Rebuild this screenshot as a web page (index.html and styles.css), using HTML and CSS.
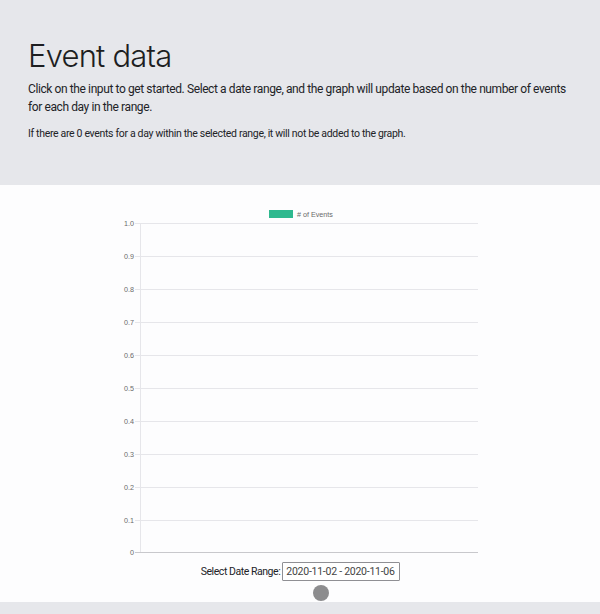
FILE: index.html
```html
<!DOCTYPE html>
<html lang="en">
<head>
<meta charset="utf-8">
<title>Event data</title>
<link rel="stylesheet" href="styles.css">
</head>
<body>
<header class="hero">
  <h1 class="hero-title">Event data</h1>
  <p class="hero-lead">Click on the input to get started. Select a date range, and the graph will update based on the number of events for each day in the range.</p>
  <p class="hero-note">If there are 0 events for a day within the selected range, it will not be added to the graph.</p>
</header>
<main class="content">
  <div class="chart">
    <svg class="chart-svg" width="390" height="358" viewBox="0 0 390 358" xmlns="http://www.w3.org/2000/svg">
      <rect x="169.5" y="10.5" width="23" height="7" fill="#2fb98f" stroke="#2fb98f" stroke-width="1"/>
      <text class="legend-text" x="197" y="16.6"># of Events</text>
      <g class="grid" stroke="#e6e6ea" stroke-width="1">
        <line x1="35" y1="23.5" x2="378" y2="23.5"/>
        <line x1="35" y1="56.5" x2="378" y2="56.5"/>
        <line x1="35" y1="89.5" x2="378" y2="89.5"/>
        <line x1="35" y1="122.5" x2="378" y2="122.5"/>
        <line x1="35" y1="155.5" x2="378" y2="155.5"/>
        <line x1="35" y1="188.5" x2="378" y2="188.5"/>
        <line x1="35" y1="221.5" x2="378" y2="221.5"/>
        <line x1="35" y1="254.5" x2="378" y2="254.5"/>
        <line x1="35" y1="287.5" x2="378" y2="287.5"/>
        <line x1="35" y1="320.5" x2="378" y2="320.5"/>
        <line x1="40.5" y1="23" x2="40.5" y2="353"/>
      </g>
      <line x1="35" y1="352.5" x2="378" y2="352.5" stroke="#c8c8cc" stroke-width="1"/>
      <g class="ticks">
        <text x="34" y="26.2">1.0</text>
        <text x="34" y="59.2">0.9</text>
        <text x="34" y="92.2">0.8</text>
        <text x="34" y="125.2">0.7</text>
        <text x="34" y="158.2">0.6</text>
        <text x="34" y="191.2">0.5</text>
        <text x="34" y="224.2">0.4</text>
        <text x="34" y="257.2">0.3</text>
        <text x="34" y="290.2">0.2</text>
        <text x="34" y="323.2">0.1</text>
        <text x="34" y="355.2">0</text>
      </g>
    </svg>
  </div>
  <div class="range">
    <label class="range-label" for="range">Select Date Range:</label>
    <input class="range-input" id="range" type="text" value="2020-11-02 - 2020-11-06" readonly>
  </div>
  <span class="cursor-dot"></span>
</main>
<footer class="band"></footer>
</body>
</html>
```

FILE: styles.css
```css
* { box-sizing: border-box; }
html, body { margin: 0; padding: 0; }
body {
  background: #fdfdfe;
  font-family: Inter, "Noto Sans", "Liberation Sans", sans-serif;
  color: #1d1e21;
  width: 600px;
  height: 614px;
  overflow: hidden;
}
.hero {
  background: #e6e7eb;
  height: 185px;
  padding: 38px 28px 0 28px;
}
.hero-title {
  margin: 0;
  font-weight: 300;
  font-size: 31px;
  line-height: 36px;
  letter-spacing: -0.8px;
}
.hero-lead {
  margin: 6px 0 0 0;
  font-family: Roboto, "Noto Sans", sans-serif;
  font-size: 12px;
  line-height: 18px;
  letter-spacing: -0.4px;
  color: #222327;
}
.hero-note {
  margin: 11px 0 0 0;
  font-family: Roboto, "Noto Sans", sans-serif;
  font-size: 10.5px;
  line-height: 14px;
  letter-spacing: -0.33px;
  color: #222327;
}
.content {
  position: relative;
  height: 417px;
  padding-top: 15px;
  display: flex;
  flex-direction: column;
  align-items: center;
}
.chart {
  width: 390px;
  height: 358px;
  margin-left: -10px;
}
.chart-svg { display: block; }
.legend-text {
  font-family: "Liberation Sans", Arial, sans-serif;
  font-size: 7.2px;
  fill: #6a6a6a;
}
.ticks text {
  font-family: "Liberation Sans", Arial, sans-serif;
  font-size: 7.2px;
  fill: #6a6a6a;
  text-anchor: end;
}
.range {
  margin-top: 4px;
  display: flex;
  align-items: center;
  gap: 2px;
  margin-left: 1px;
}
.range-label {
  font-family: Roboto, "Noto Sans", sans-serif;
  font-size: 10.5px;
  letter-spacing: -0.45px;
  color: #222327;
}
.range-input {
  width: 118px;
  height: 19px;
  border: 1px solid #8f8f94;
  border-radius: 1px;
  padding: 0 3px;
  font-family: Roboto, "Noto Sans", sans-serif;
  font-size: 10.5px;
  letter-spacing: -0.25px;
  color: #444;
  background: #fff;
  outline: none;
}
.cursor-dot {
  position: absolute;
  left: 313px;
  top: 400px;
  width: 16px;
  height: 16px;
  border-radius: 50%;
  background: #8c8c8e;
}
.band {
  background: #e6e7eb;
  height: 12px;
}
```
